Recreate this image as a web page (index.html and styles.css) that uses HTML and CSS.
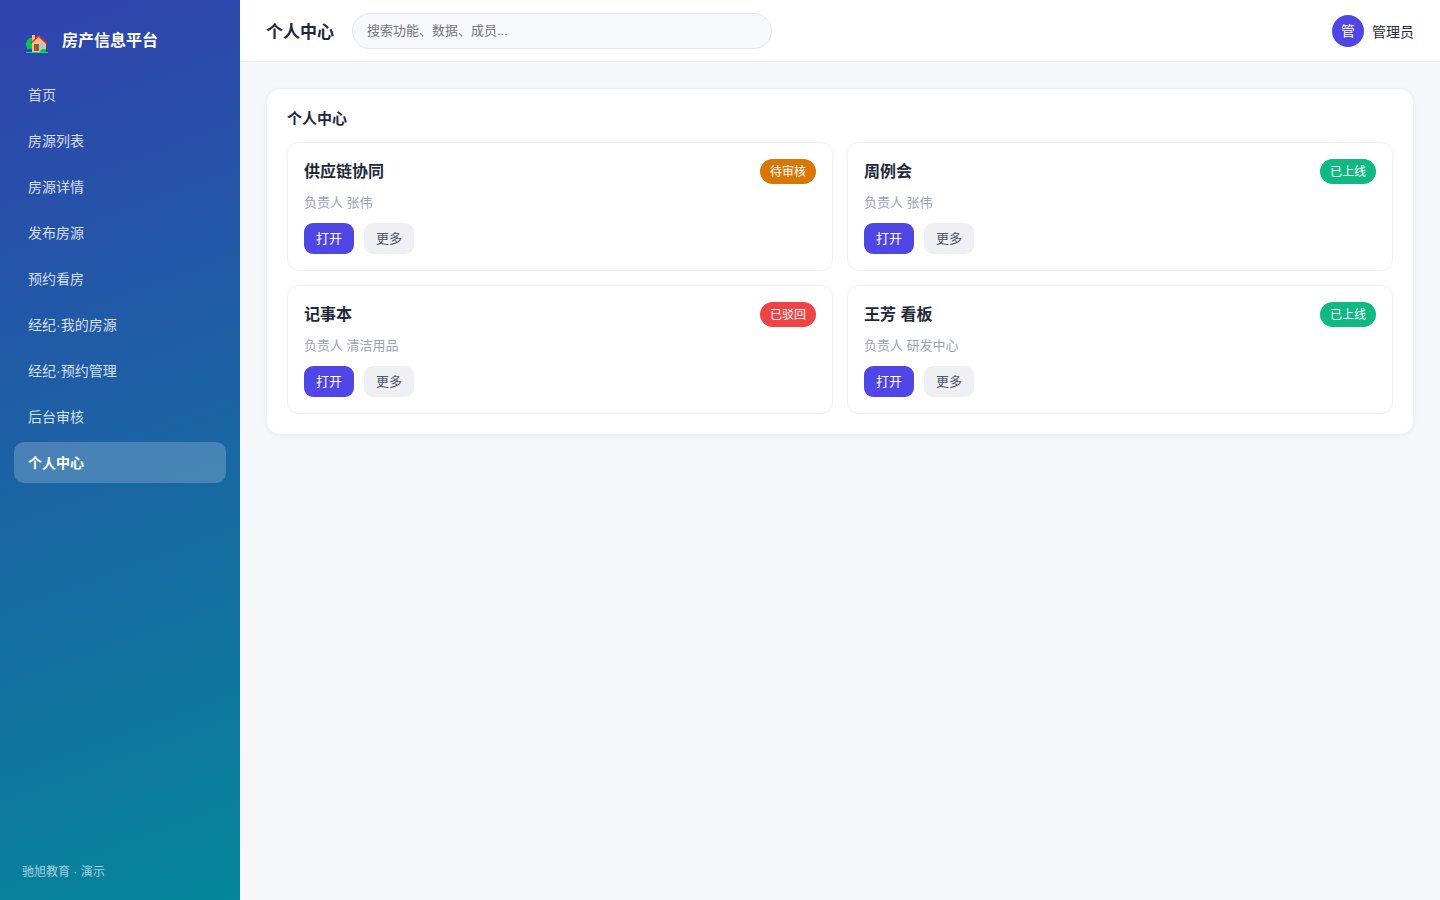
FILE: index.html
```html
<!DOCTYPE html>
<html lang="zh-CN">
<head>
    <meta charset="UTF-8">
    <meta name="viewport" content="width=device-width, initial-scale=1.0">
    <title>个人中心 - 房产信息平台</title>
    <link rel="stylesheet" href="styles.css">
</head>
<body>
    <div class="layout">
        <aside class="sidebar">
            <div class="brand">
                <svg class="brand-icon" viewBox="0 0 22 18" aria-hidden="true">
                    <path d="M4 3h3v11H1V12l-1-1V8l1-1V5h1V4z" fill="#00c853"/>
                    <rect x="0" y="17" width="22" height="1" fill="#00e676"/>
                    <rect x="6" y="0" width="3" height="7" fill="#f5bf7e"/>
                    <path d="M12.5 1L6 7v10h14V8z" fill="#f5bf7e"/>
                    <path d="M4.5 8.500L12.500 1l8 7.500" fill="none" stroke="#f22c2c" stroke-width="1.500"/>
                    <rect x="8" y="9" width="5" height="7" fill="#8d5a44"/>
                    <rect x="14" y="9" width="4" height="4" fill="#90caf9"/>
                    <path d="M14 17v-1l2-2h4v3z" fill="#00c853"/>
                </svg>
                <span>房产信息平台</span>
            </div>
            <nav class="nav">
                <a href="#">首页</a>
                <a href="#">房源列表</a>
                <a href="#">房源详情</a>
                <a href="#">发布房源</a>
                <a href="#">预约看房</a>
                <a href="#">经纪·我的房源</a>
                <a href="#">经纪·预约管理</a>
                <a href="#">后台审核</a>
                <a href="#" class="active" aria-current="page">个人中心</a>
            </nav>
            <div class="sidebar-footer">驰旭教育 · 演示</div>
        </aside>

        <div class="main">
            <header class="topbar">
                <h1>个人中心</h1>
                <input class="search" type="search" placeholder="搜索功能、数据、成员..." aria-label="搜索">
                <div class="user">
                    <span class="avatar">管</span>
                    <span>管理员</span>
                </div>
            </header>

            <main class="content">
                <section class="panel">
                    <h2>个人中心</h2>
                    <div class="grid">
                        <article class="card">
                            <div class="card-head">
                                <h3>供应链协同</h3>
                                <span class="badge badge-pending">待审核</span>
                            </div>
                            <p class="meta">负责人 张伟</p>
                            <div class="actions">
                                <button type="button" class="btn btn-primary">打开</button>
                                <button type="button" class="btn">更多</button>
                            </div>
                        </article>
                        <article class="card">
                            <div class="card-head">
                                <h3>周例会</h3>
                                <span class="badge badge-online">已上线</span>
                            </div>
                            <p class="meta">负责人 张伟</p>
                            <div class="actions">
                                <button type="button" class="btn btn-primary">打开</button>
                                <button type="button" class="btn">更多</button>
                            </div>
                        </article>
                        <article class="card">
                            <div class="card-head">
                                <h3>记事本</h3>
                                <span class="badge badge-rejected">已驳回</span>
                            </div>
                            <p class="meta">负责人 清洁用品</p>
                            <div class="actions">
                                <button type="button" class="btn btn-primary">打开</button>
                                <button type="button" class="btn">更多</button>
                            </div>
                        </article>
                        <article class="card">
                            <div class="card-head">
                                <h3>王芳 看板</h3>
                                <span class="badge badge-online">已上线</span>
                            </div>
                            <p class="meta">负责人 研发中心</p>
                            <div class="actions">
                                <button type="button" class="btn btn-primary">打开</button>
                                <button type="button" class="btn">更多</button>
                            </div>
                        </article>
                    </div>
                </section>
            </main>
        </div>
    </div>
</body>
</html>
```
FILE: styles.css
```css
* {
    box-sizing: border-box;
    margin: 0;
    padding: 0;
}

body {
    font-family: "Liberation Sans", "Noto Sans CJK SC", sans-serif;
    font-size: 14px;
    color: #1e293b;
    background: #f5f7fb;
}

button,
input {
    font-family: inherit;
}

.layout {
    display: flex;
    min-height: 100vh;
}

/* Sidebar */
.sidebar {
    display: flex;
    flex-direction: column;
    flex-shrink: 0;
    width: 240px;
    padding: 22px 14px 20px;
    color: #fff;
    background: linear-gradient(160deg, #3142ae, #05869a);
}

.brand {
    display: flex;
    align-items: center;
    gap: 14px;
    height: 34px;
    margin-bottom: 18px;
    padding: 0 12px;
    font-size: 16px;
    font-weight: 700;
}

.brand-icon {
    width: 22px;
    height: 18px;
    margin-top: 10px;
}

.nav {
    display: flex;
    flex-direction: column;
    gap: 5px;
}

.nav a {
    padding: 11px 14px 9px;
    border-radius: 10px;
    line-height: 21px;
    color: rgba(255, 255, 255, 0.82);
    text-decoration: none;
}

.nav a.active {
    color: #fff;
    font-weight: 700;
    background: rgba(255, 255, 255, 0.2);
}

.sidebar-footer {
    margin-top: auto;
    padding: 0 8px;
    font-size: 12px;
    line-height: 16px;
    color: rgba(255, 255, 255, 0.65);
}

/* Top bar */
.main {
    flex: 1;
    min-width: 0;
}

.topbar {
    display: flex;
    align-items: center;
    gap: 18px;
    height: 62px;
    padding: 0 26px;
    background: #fff;
    border-bottom: 1px solid #eceef4;
}

.topbar h1 {
    font-size: 17px;
}

.search {
    width: 420px;
    height: 36px;
    padding: 0 14px;
    border: 1px solid #e5e7f0;
    border-radius: 18px;
    font-size: 13px;
    background: #f7f8fc;
    appearance: none;
}

.search::placeholder {
    color: #757575;
}

.user {
    display: flex;
    align-items: center;
    gap: 8px;
    margin-left: auto;
}

.avatar {
    width: 32px;
    height: 32px;
    border-radius: 50%;
    line-height: 32px;
    text-align: center;
    color: #fff;
    background: #4f46e5;
}

/* Content */
.content {
    padding: 26px;
}

.panel {
    padding: 20px;
    border: 1px solid #eef0f5;
    border-radius: 14px;
    background: #fff;
    box-shadow: 0 1px 4px rgba(30, 41, 90, 0.05);
}

.panel h2 {
    margin-bottom: 14px;
    font-size: 15px;
    line-height: 19px;
}

.grid {
    display: grid;
    grid-template-columns: repeat(2, 1fr);
    gap: 14px;
}

.card {
    padding: 16px;
    border: 1px solid #eef0f4;
    border-radius: 12px;
}

.card-head {
    display: flex;
    align-items: center;
    justify-content: space-between;
}

.card-head h3 {
    font-size: 16px;
    line-height: 25px;
}

.badge {
    padding: 1px 10px 0;
    border-radius: 13px;
    font-size: 12px;
    line-height: 24px;
    color: #fff;
}

.badge-pending {
    background: #d97706;
}

.badge-online {
    background: #10b981;
}

.badge-rejected {
    background: #ef4444;
}

.meta {
    margin: 9px 0 10px;
    font-size: 13px;
    line-height: 20px;
    color: #94a3b8;
}

.actions {
    display: flex;
    gap: 10px;
}

.btn {
    padding: 0 12px;
    border: none;
    border-radius: 9px;
    font-size: 13px;
    line-height: 31px;
    color: #475569;
    background: #eef0f4;
    cursor: pointer;
}

.btn-primary {
    color: #fff;
    background: #4f46e5;
}
```
